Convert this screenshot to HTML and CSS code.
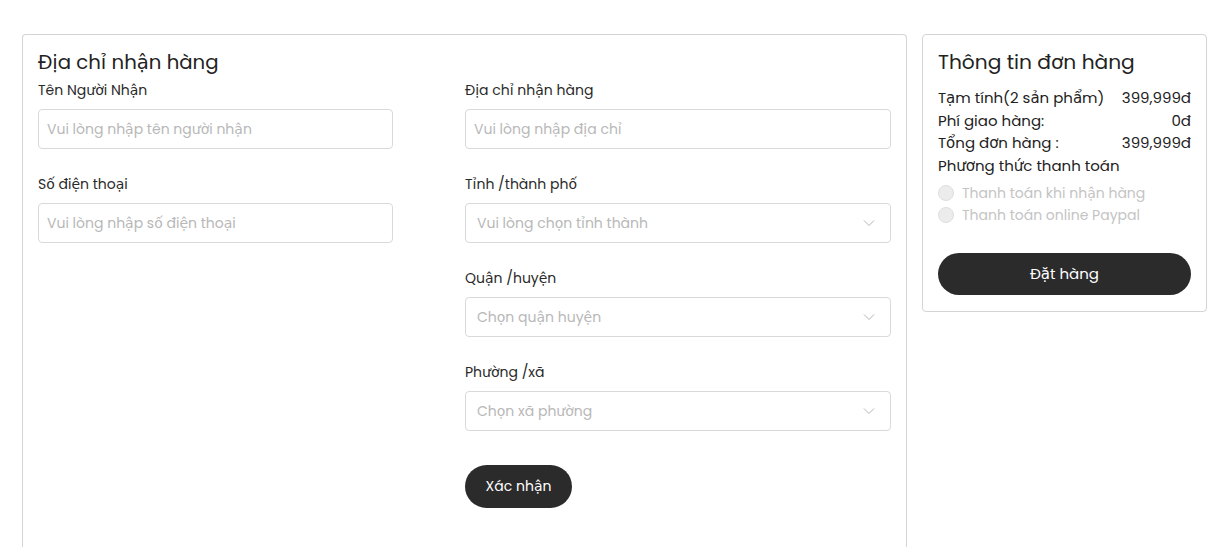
FILE: index.html
```html
<!DOCTYPE html>
<html lang="vi">
<head>
<meta charset="utf-8">
<title>Đặt hàng</title>
<link rel="stylesheet" href="styles.css">
</head>
<body>
<main class="page">
  <section class="card address">
    <h2 class="card-title">Địa chỉ nhận hàng</h2>
    <div class="form-grid">
      <div class="col">
        <div class="field">
          <label class="label">Tên Người Nhận</label>
          <div class="input"><span class="ph">Vui lòng nhập tên người nhận</span></div>
        </div>
        <div class="field">
          <label class="label">Số điện thoại</label>
          <div class="input"><span class="ph">Vui lòng nhập số điện thoại</span></div>
        </div>
      </div>
      <div class="col">
        <div class="field">
          <label class="label">Địa chỉ nhận hàng</label>
          <div class="input"><span class="ph">Vui lòng nhập địa chỉ</span></div>
        </div>
        <div class="field">
          <label class="label">Tỉnh /thành phố</label>
          <div class="input select"><span class="ph">Vui lòng chọn tỉnh thành</span><svg class="chev" viewBox="0 0 12 8" width="12" height="8"><path d="M1 1.5l5 5 5-5" fill="none" stroke="#b5b5b5" stroke-width="1"/></svg></div>
        </div>
        <div class="field">
          <label class="label">Quận /huyện</label>
          <div class="input select"><span class="ph">Chọn quận huyện</span><svg class="chev" viewBox="0 0 12 8" width="12" height="8"><path d="M1 1.5l5 5 5-5" fill="none" stroke="#b5b5b5" stroke-width="1"/></svg></div>
        </div>
        <div class="field">
          <label class="label">Phường /xã</label>
          <div class="input select"><span class="ph">Chọn xã phường</span><svg class="chev" viewBox="0 0 12 8" width="12" height="8"><path d="M1 1.5l5 5 5-5" fill="none" stroke="#b5b5b5" stroke-width="1"/></svg></div>
        </div>
        <button class="btn btn-confirm">Xác nhận</button>
      </div>
    </div>
  </section>
  <aside class="card summary">
    <h2 class="card-title">Thông tin đơn hàng</h2>
    <div class="row"><span>Tạm tính(2 sản phẩm)</span><span>399,999đ</span></div>
    <div class="row"><span>Phí giao hàng:</span><span>0đ</span></div>
    <div class="row"><span>Tổng đơn hàng :</span><span>399,999đ</span></div>
    <div class="row"><span>Phương thức thanh toán</span></div>
    <div class="radios">
      <div class="radio"><span class="dot"></span><span>Thanh toán khi nhận hàng</span></div>
      <div class="radio"><span class="dot"></span><span>Thanh toán online Paypal</span></div>
    </div>
    <button class="btn btn-order">Đặt hàng</button>
  </aside>
</main>
</body>
</html>
```
FILE: styles.css
```css
* { box-sizing: border-box; }
html, body { margin: 0; background: #fff; }
body {
  font-family: "Poppins", "DejaVu Sans", sans-serif;
  color: #2a2a2a;
  overflow: hidden;
}
.page {
  display: flex;
  align-items: flex-start;
  gap: 15px;
  padding: 34px 0 0 22px;
}
.card {
  border: 1px solid #d4d4d4;
  border-radius: 4px;
  background: #fff;
}
.address {
  width: 885px;
  height: 540px;
  padding: 12px 15px 0 15px;
  border-bottom: none;
}
.card-title {
  margin: 0;
  font-weight: 400;
  font-size: 20px;
  line-height: 30px;
  color: #222;
}
.address .card-title { font-size: 19.7px; }
.summary .card-title { font-size: 20.2px; }
.form-grid {
  display: grid;
  grid-template-columns: 355px 426px;
  column-gap: 72px;
  margin-top: 3px;
}
.field { margin-bottom: 25px; }
.label {
  display: block;
  font-size: 14px;
  line-height: 20px;
  color: #2a2a2a;
  margin-bottom: 9px;
}
.input {
  height: 40px;
  border: 1px solid #d9d9d9;
  border-radius: 4px;
  display: flex;
  align-items: center;
  padding: 0 8px;
  font-size: 14px;
}
.select { padding: 0 11px; justify-content: space-between; }
.ph { color: #b8b8b8; }
.chev { margin-right: 4px; }
.btn {
  border: none;
  background: #2b2b2c;
  color: #fff;
  font-family: inherit;
  font-size: 14px;
  border-radius: 22px;
}
.btn-confirm {
  margin-top: 9px;
  width: 107px;
  height: 43px;
}
.summary {
  width: 285px;
  padding: 12px 15px 16px 15px;
}
.summary .card-title { margin-bottom: 10px; }
.row {
  display: flex;
  justify-content: space-between;
  font-size: 15px;
  line-height: 22.7px;
  color: #222;
}
.radios { margin-top: 4px; }
.radio {
  display: flex;
  align-items: center;
  gap: 8px;
  font-size: 14px;
  line-height: 22px;
  color: #c4c4c4;
}
.dot {
  width: 16px;
  height: 16px;
  border-radius: 50%;
  background: #ececec;
  border: 1px solid #dedede;
}
.btn-order {
  display: block;
  width: 253px;
  height: 42px;
  margin-top: 27px;
  font-size: 15px;
}
```
